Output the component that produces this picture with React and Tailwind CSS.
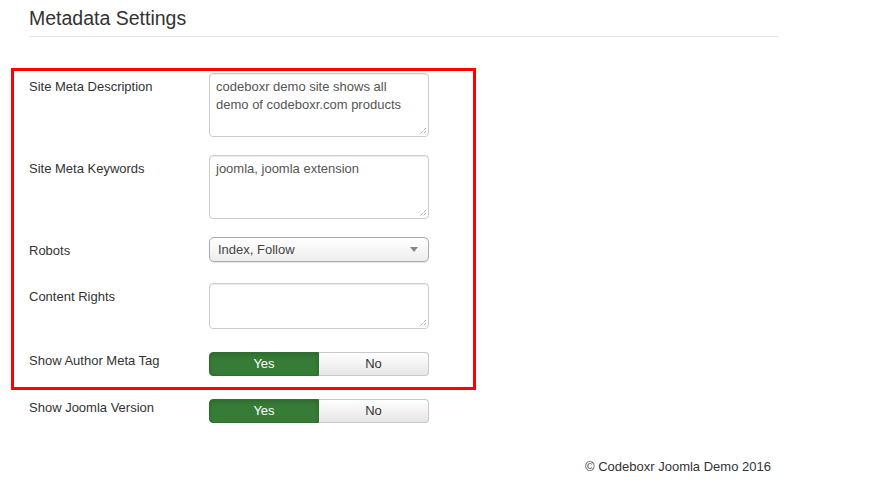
const font = { fontFamily: '"Liberation Sans", Arial, sans-serif' };

function TextArea({ value, height }) {
    return (
        <div
            className={`relative w-[220px] ${height} rounded-[4px] border border-[#cccccc] bg-white px-[6px] pt-[4px] text-[13px] leading-[18px] text-[#555555] shadow-[inset_0_1px_1px_rgba(0,0,0,0.075)]`}
        >
            {value}
            {/* resize grip */}
            <svg
                className="absolute right-[1px] bottom-[1px]"
                width="9"
                height="9"
                viewBox="0 0 9 9"
            >
                <path d="M8 2 L2 8 M8 5 L5 8" stroke="#888" strokeWidth="1" strokeDasharray="1 1" />
            </svg>
        </div>
    );
}

function Toggle() {
    return (
        <div className="flex h-[24px] w-[220px] text-[13px]">
            <div className="flex w-[110px] items-center justify-center rounded-l-[4px] border border-[#2f6f2f] bg-[#367c36] text-white shadow-[inset_0_2px_4px_rgba(0,0,0,0.15)]">
                Yes
            </div>
            <div className="flex w-[110px] items-center justify-center rounded-r-[4px] border border-l-0 border-[#c8c8c8] bg-gradient-to-b from-white to-[#e6e6e6] text-[#333333]">
                No
            </div>
        </div>
    );
}

function Row({ label, children, className = "", labelPad = "pt-[5px]" }) {
    return (
        <div className={`flex ${className}`}>
            <div className={`w-[180px] text-[13px] leading-[18px] text-[#333333] ${labelPad}`}>
                {label}
            </div>
            {children}
        </div>
    );
}

export default function App() {
    return (
        <div className="min-h-[488px] w-[894px] bg-white" style={font}>
            {/* Header */}
            <div className="ml-[29px] w-[749px] border-b border-[#e5e5e5] pt-[7px] pb-[7px]">
                <h2 className="text-[19.5px] leading-[22px] text-[#333333]">Metadata Settings</h2>
            </div>

            {/* Highlighted settings */}
            <div className="mt-[31px] ml-[11px] w-[465px] border-[3px] border-[#ff0000] pt-[2px] pb-[11px] pl-[15px]">
                <Row label="Site Meta Description">
                    <TextArea
                        height="h-[64px]"
                        value="codeboxr demo site shows all demo of codeboxr.com products"
                    />
                </Row>
                <Row label="Site Meta Keywords" className="mt-[18px]">
                    <TextArea height="h-[64px]" value="joomla, joomla extension" />
                </Row>
                <Row label="Robots" className="mt-[18px]">
                    <div className="flex h-[25px] w-[220px] items-center justify-between rounded-[5px] border border-[#aaaaaa] bg-gradient-to-b from-white to-[#eeeeee] pr-[10px] pl-[8px] text-[13px] text-[#444444] shadow-[0_1px_1px_rgba(0,0,0,0.1)]">
                        <span>Index, Follow</span>
                        <svg width="8" height="5" viewBox="0 0 8 5">
                            <path d="M0 0 L8 0 L4 5 Z" fill="#888888" />
                        </svg>
                    </div>
                </Row>
                <Row label="Content Rights" className="mt-[21px]">
                    <TextArea height="h-[46px]" value="" />
                </Row>
                <Row label="Show Author Meta Tag" className="mt-[23px]" labelPad="pt-0">
                    <Toggle />
                </Row>
            </div>

            <Row label="Show Joomla Version" className="mt-[9px] ml-[29px]" labelPad="pt-0">
                <Toggle />
            </Row>

            {/* Footer */}
            <div className="mt-[35px] ml-[585px] text-[13px] leading-[18px] text-[#333333]">
                © Codeboxr Joomla Demo 2016
            </div>
        </div>
    );
}
